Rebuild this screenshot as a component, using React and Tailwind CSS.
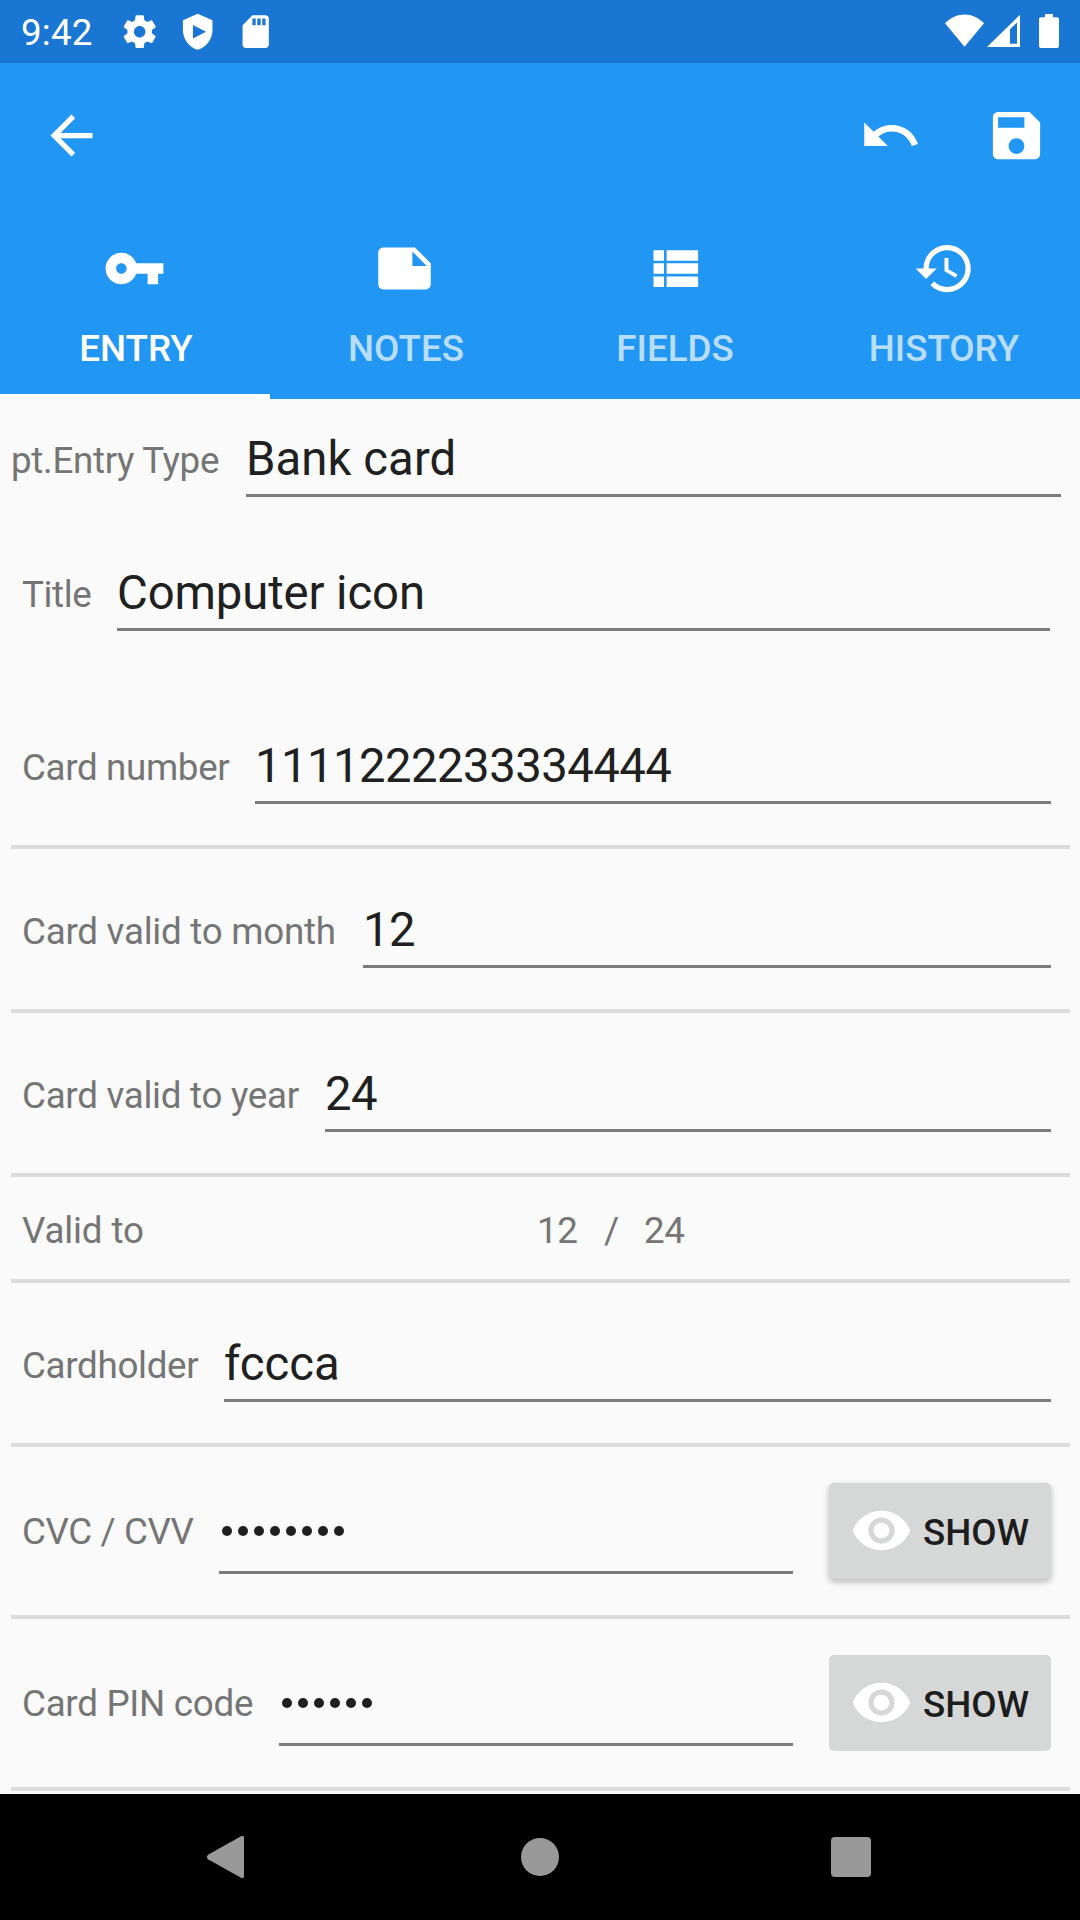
const ICONS = {
  back: 'M20 11H7.83l5.59-5.59L12 4l-8 8 8 8 1.41-1.41L7.83 13H20v-2z',
  undo: 'M12.5 8c-2.65 0-5.05.99-6.9 2.6L2 7v9h9l-3.62-3.62c1.39-1.16 3.16-1.88 5.12-1.88 3.54 0 6.55 2.31 7.6 5.5l2.37-.78C21.08 11.03 17.15 8 12.5 8z',
  save: 'M17 3H5c-1.11 0-2 .9-2 2v14c0 1.1.89 2 2 2h14c1.1 0 2-.9 2-2V7l-4-4zm-5 16c-1.66 0-3-1.34-3-3s1.34-3 3-3 3 1.34 3 3-1.34 3-3 3zm3-10H5V5h10v4z',
  key: 'M12.65 10C11.83 7.67 9.61 6 7 6c-3.31 0-6 2.69-6 6s2.69 6 6 6c2.61 0 4.83-1.67 5.65-4H17v4h4v-4h2v-4H12.65zM7 14c-1.1 0-2-.9-2-2s.9-2 2-2 2 .9 2 2-.9 2-2 2z',
  note: 'M22 10l-6-6H4c-1.1 0-2 .9-2 2v12.01c0 1.1.9 1.99 2 1.99l16-.01c1.1 0 2-.89 2-2v-8zm-7-4.5l5.5 5.5H15V5.5z',
  list: 'M4 14h4v-4H4v4zm0 5h4v-4H4v4zM4 9h4V5H4v4zm5 5h12v-4H9v4zm0 5h12v-4H9v4zM9 5v4h12V5H9z',
  history: 'M13 3c-4.97 0-9 4.03-9 9H1l3.89 3.89.07.14L9 12H6c0-3.87 3.13-7 7-7s7 3.13 7 7-3.13 7-7 7c-1.93 0-3.68-.79-4.94-2.06l-1.42 1.42C8.27 19.99 10.51 21 13 21c4.97 0 9-4.03 9-9s-4.03-9-9-9zm-1 5v5l4.28 2.54.72-1.21-3.5-2.08V8H12z',
  gear: 'M19.43 12.98c.04-.32.07-.64.07-.98s-.03-.66-.07-.98l2.11-1.65c.19-.15.24-.42.12-.64l-2-3.46c-.12-.22-.39-.3-.61-.22l-2.49 1c-.52-.4-1.08-.73-1.69-.98l-.38-2.65C14.46 2.18 14.25 2 14 2h-4c-.25 0-.46.18-.49.42l-.38 2.65c-.61.25-1.17.59-1.69.98l-2.49-1c-.23-.09-.49 0-.61.22l-2 3.46c-.13.22-.07.49.12.64l2.11 1.65c-.04.32-.07.65-.07.98s.03.66.07.98l-2.11 1.65c-.19.15-.24.42-.12.64l2 3.46c.12.22.39.3.61.22l2.49-1c.52.4 1.08.73 1.69.98l.38 2.65c.03.24.24.42.49.42h4c.25 0 .46-.18.49-.42l.38-2.65c.61-.25 1.17-.59 1.69-.98l2.49 1c.23.09.49 0 .61-.22l2-3.46c.12-.22.07-.49-.12-.64l-2.11-1.65zM12 15.5c-1.93 0-3.5-1.57-3.5-3.5s1.57-3.5 3.5-3.5 3.5 1.57 3.5 3.5-1.57 3.5-3.5 3.5z',
  shield: 'M12 1L3 5v6c0 5.55 3.84 10.74 9 12 5.16-1.26 9-6.45 9-12V5l-9-4zM9.1 7.9l8 4.1l-8 4.1z',
  sd: 'M18 2h-8L4.02 8 4 20c0 1.1.9 2 2 2h12c1.1 0 2-.9 2-2V4c0-1.1-.9-2-2-2zm-6 6h-2V4h2v4zm3 0h-2V4h2v4zm3 0h-2V4h2v4z',
  eye: 'M12 4.5C7 4.5 2.73 7.61 1 12c1.73 4.39 6 7.5 11 7.5s9.27-3.11 11-7.5c-1.73-4.39-6-7.5-11-7.5zM12 17c-2.76 0-5-2.24-5-5s2.24-5 5-5 5 2.24 5 5-2.24 5-5 5zm0-8c-1.66 0-3 1.34-3 3s1.34 3 3 3 3-1.34 3-3-1.34-3-3-3z',
}

function Icon({ name, className = 'size-[63px]' }) {
  return (
    <svg viewBox="0 0 24 24" fill="currentColor" fillRule="evenodd" className={`shrink-0 ${className}`}>
      <path d={ICONS[name]} />
    </svg>
  )
}

function StatusBar() {
  return (
    <div className="flex h-[63px] items-center bg-[#1976d2] text-white">
      <span className="ml-[21px] w-[99px] pt-[2px] text-[36.75px] leading-[63px] tracking-[0.2px]">9:42</span>
      <div className="flex items-center gap-[18.6px]">
        <Icon name="gear" className="size-[39.4px]" />
        <Icon name="shield" className="size-[39.4px]" />
        <Icon name="sd" className="size-[39.4px]" />
      </div>
      <svg viewBox="0 0 120 63" fill="currentColor" className="ml-auto mr-[20px] h-[63px] w-[120px]">
        <path d="M5 23.300C16 11.500 33 11.500 44 23.300L24.500 46.700z" />
        <path fillRule="evenodd" d="M80 14.700V47H47zM77 22.500L70 29.200V43.700H77z" />
        <path d="M105 14h8v3.300h4q2 0 2 2V46q0 2-2 2h-16q-2 0-2-2V19.300q0-2 2-2h4z" />
      </svg>
    </div>
  )
}

function TabItem({ icon, label, active, labelClass = '' }) {
  return (
    <div className="flex flex-1 flex-col items-center pt-[27px]">
      <Icon name={icon} className="mr-px size-[63px]" />
      <span className={`mt-[27px] text-[36.75px] leading-[44px] font-medium ${labelClass} ${active ? 'text-white' : 'text-white/70'}`}>
        {label}
      </span>
      <div className={`mt-auto h-[5px] w-full ${active ? 'bg-white' : ''}`} />
    </div>
  )
}

function Label({ children, className = '' }) {
  return <span className={`shrink-0 whitespace-pre text-[36.75px] leading-[44px] text-[#757575] ${className}`}>{children}</span>
}

function Field({ label, labelClass, value, valueClass = '', className, secret }) {
  return (
    <div className={`flex items-end ${className}`}>
      <Label className={`${secret ? 'mb-[20px]' : 'mb-[14px]'} ${labelClass}`}>{label}</Label>
      <div className="flex-1 border-b-[3px] border-[#7c7c7c]">
        {secret ? (
          <div className="flex h-[84px] gap-[6px] pt-[39px] pl-[2.500px]">
            {Array.from(value).map((c, i) => (
              <span key={i} className="size-[10px] shrink-0 rounded-full bg-[#202020]" />
            ))}
          </div>
        ) : (
          <div className={`pb-[7px] text-[47.25px] leading-[56px] text-[#202020] ${valueClass}`}>{value}</div>
        )}
      </div>
    </div>
  )
}

function Divider() {
  return <div className="ml-[11px] h-[4px] w-[1059px] shrink-0 bg-[#dcdcdc]" />
}

function ShowButton({ raised }) {
  return (
    <button
      className={`ml-[36px] flex h-[96px] w-[222px] shrink-0 items-center rounded-[5px] bg-[#d6d7d7] pl-[21px] text-[#1d1d1d] ${
        raised ? 'shadow-[0_3px_6px_rgba(0,0,0,0.26)]' : ''
      }`}
    >
      <Icon name="eye" className="mb-px size-[63px] text-white" />
      <span className="mt-[4px] ml-[10px] text-[36.75px] leading-[44px] font-medium">SHOW</span>
    </button>
  )
}

function SecretRow({ label, labelClass, value, raised }) {
  return (
    <div className="flex h-[168px] shrink-0 items-start pl-[22px]">
      <Field secret label={label} labelClass={labelClass} value={value} className="mt-[40px] w-[771px]" />
      <div className="mt-[36px]">
        <ShowButton raised={raised} />
      </div>
    </div>
  )
}

export default function App() {
  return (
    <div className="flex h-[1920px] w-[1080px] flex-col overflow-hidden bg-[#fafafa] font-['Roboto',sans-serif]">
      <header className="shrink-0 bg-[#2196f3] text-white">
        <StatusBar />
        <div className="flex h-[147px] items-center pr-[32px] pb-[2px] pl-[40px]">
          <Icon name="back" />
          <div className="ml-auto flex gap-[63px]">
            <Icon name="undo" />
            <Icon name="save" />
          </div>
        </div>
        <nav className="flex h-[189px]">
          <TabItem icon="key" label="ENTRY" labelClass="pl-[2px]" active />
          <TabItem icon="note" label="NOTES" labelClass="pl-[2px]" />
          <TabItem icon="list" label="FIELDS" />
          <TabItem icon="history" label="HISTORY" labelClass="pr-[2px]" />
        </nav>
      </header>

      <main className="flex h-[1395px] shrink-0 flex-col overflow-hidden">
        <Field
          label="pt.Entry Type"
          labelClass="w-[235px] tracking-[-0.32px]"
          value="Bank card"
          valueClass="tracking-[0.08px]"
          className="h-[98px] shrink-0 pr-[19px] pl-[11px]"
        />
        <Field
          label="Title"
          labelClass="w-[95px] tracking-[-0.4px]"
          value="Computer icon"
          valueClass="tracking-[-0.1px]"
          className="h-[134px] shrink-0 pr-[30px] pl-[22px]"
        />
        <Field
          label="Card number"
          labelClass="w-[233px] tracking-[-0.35px]"
          value="1111222233334444"
          valueClass="tracking-[-0.54px]"
          className="mb-[41px] h-[173px] shrink-0 pr-[29px] pl-[22px]"
        />
        <Divider />
        <Field
          label="Card valid to month"
          labelClass="w-[341px] tracking-[-0.25px]"
          value="12"
          valueClass="tracking-[-0.54px]"
          className="mb-[41px] h-[119px] shrink-0 pr-[29px] pl-[22px]"
        />
        <Divider />
        <Field
          label="Card valid to year"
          labelClass="w-[303px] tracking-[-0.28px]"
          value="24"
          valueClass="tracking-[-0.54px]"
          className="mb-[41px] h-[119px] shrink-0 pr-[29px] pl-[22px]"
        />
        <Divider />
        <div className="flex h-[102px] shrink-0 items-center pt-[6px] pl-[22px]">
          <Label className="w-[515px] tracking-[-0.15px]">Valid to</Label>
          <Label className="w-[67px] tracking-[-0.3px]">12</Label>
          <Label className="w-[40px]">/</Label>
          <Label className="tracking-[-0.3px]">24</Label>
        </div>
        <Divider />
        <Field
          label="Cardholder"
          labelClass="w-[202px] tracking-[-0.32px]"
          value="fccca"
          className="mb-[41px] h-[119px] shrink-0 pr-[29px] pl-[22px]"
        />
        <Divider />
        <SecretRow label="CVC / CVV" labelClass="w-[197px] tracking-[-0.4px]" value="••••••••" raised />
        <Divider />
        <SecretRow label="Card PIN code" labelClass="w-[257px] tracking-[-0.28px]" value="••••••" />
        <Divider />
      </main>

      <footer className="flex h-[126px] shrink-0 items-center bg-black pl-[206px] text-[#999999]">
        <svg viewBox="0 0 38 44" fill="currentColor" className="h-[44px] w-[38px]">
          <path d="M35 1.200Q38 -.3 38 3V41Q38 44.300 35 42.800L2 24.300Q-.2 22 2 19.700z" />
        </svg>
        <div className="ml-[277px] size-[38px] rounded-full bg-[#999999]" />
        <div className="ml-[272px] size-[40px] rounded-[4px] bg-[#999999]" />
      </footer>
    </div>
  )
}
